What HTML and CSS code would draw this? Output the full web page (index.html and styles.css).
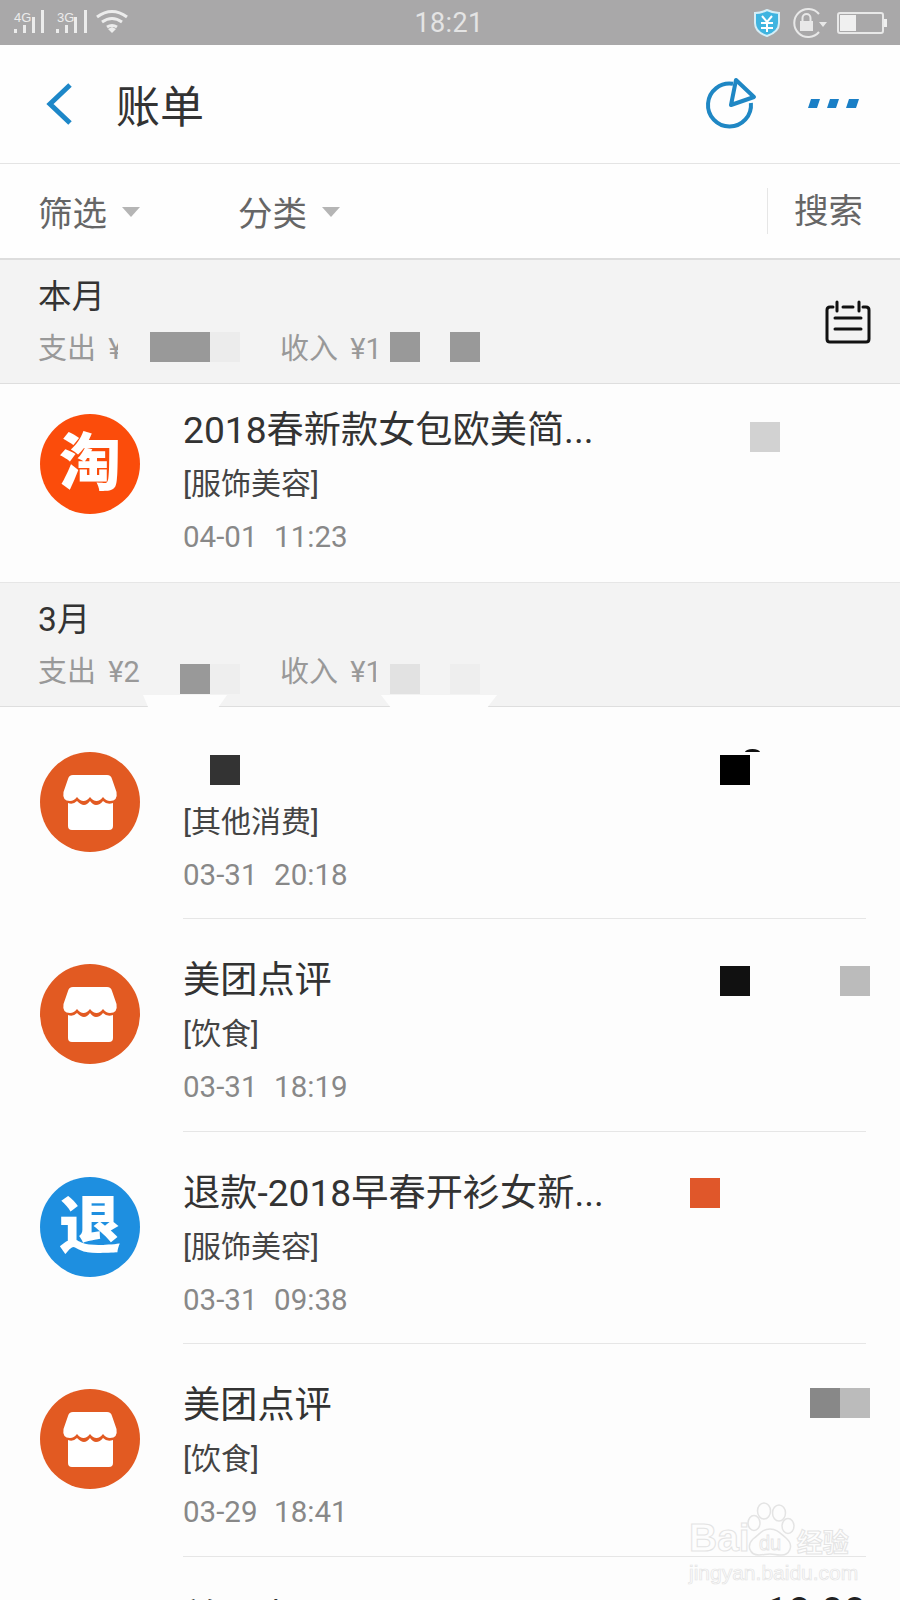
FILE: index.html
```html
<!DOCTYPE html>
<html>

<head>
    <title>账单</title>
    <link rel="stylesheet" href="styles.css">
</head>

<body>
    <div class="page">
        <!-- barra de status -->
        <div class="status-bar">
            <svg class="status-signal" width="135" height="45" viewBox="0 0 135 45">
                <text class="net-label" x="14" y="22">4G</text>
                <text class="net-label" x="57" y="22">3G</text>
                <path class="bars" d="M14 29h3v4h-3zM23 25h3v8h-3zM32 17h3v16h-3zM41 10h3v23h-3zM56 29h3v4h-3zM65 25h3v8h-3zM74 17h3v16h-3zM84 10h3v23h-3z" />
                <path class="wifi" d="M97 17q15-11 30 0M102 22q10-7 20 0M107 27q5-3 10 0" />
                <path class="bars" d="M108 29l4-2 4 2-4 4z" />
            </svg>
            <div class="status-time">18:21</div>
            <div class="status-right">
                <svg class="st-shield" width="28" height="30" viewBox="0 0 28 30">
                    <path class="shield" d="M14 2q6 3 12 3v10q0 9-12 13Q2 24 2 15V5q6 0 12-3z" />
                    <path class="shield-mark" d="M9 8l5 6 5-6M8 15h12M8 20h12M14 14v10" />
                </svg>
                <svg class="st-lock" width="38" height="30" viewBox="0 0 38 30">
                    <path class="lock-ring" d="M29 24a14 14 0 1 1 0-18" />
                    <path class="lock-fill" d="M10 13h13v10H10zM37 14l-4 5-4-5z" />
                    <path class="lock-ring" d="M12.500 13V10a4 4 0 0 1 8 0v3" />
                </svg>
                <svg width="52" height="24" viewBox="0 0 52 24">
                    <rect class="batt-box" x="1" y="2" width="45" height="20" rx="2" />
                    <rect class="batt-fill" x="3" y="4" width="16" height="16" />
                    <rect class="batt-cap" x="47" y="8" width="3" height="8" />
                </svg>
            </div>
        </div>

        <!-- cabecalho -->
        <header class="top-bar">
            <svg class="back-icon" width="28" height="42" viewBox="0 0 28 42">
                <path d="M25 2L5 21l20 19" />
            </svg>
            <h1 class="top-title">账单</h1>
            <svg class="pie-icon" width="52" height="54" viewBox="0 0 52 54">
                <path d="M28 6.800A21.500 21.500 0 1 0 45.900 26" />
                <path d="M31 3L49 20L26 28Z" />
            </svg>
            <svg class="more-icon" width="52" height="10" viewBox="0 0 52 10">
                <path d="M3 0h9l-3 9H0zM22 0h9l-3 9h-9zM41 0h10l-3 9h-10z" />
            </svg>
        </header>

        <!-- filtros -->
        <div class="filter-bar">
            <div class="filter filter-first">筛选<span class="caret"></span></div>
            <div class="filter">分类<span class="caret"></span></div>
            <div class="search">搜索</div>
        </div>

        <!-- mes atual -->
        <section class="month">
            <div class="month-name">本月</div>
            <div class="month-sum">
                <span class="sum-out clip-a">支出 ¥</span>
                <span class="sum-in clip-c">收入 ¥1</span>
            </div>
            <svg class="cal-icon" width="46" height="44" viewBox="0 0 46 44">
                <path d="M8 7H5Q2 7 2 10v29q0 3 3 3h36q3 0 3-3V10q0-3-3-3h-3M18 7h10M12 2v9M34 2v9M10 18h26M10 29h26" />
            </svg>
            <i class="blur m-150 w-60 t-72 c-999"></i>
            <i class="blur m-210 t-72 c-ec"></i>
            <i class="blur m-390 t-72 c-999"></i>
            <i class="blur m-450 t-72 c-999"></i>
        </section>

        <div class="row row-tight">
            <i class="smudge smudge-top"></i>
            <div class="avatar avatar-taobao">淘</div>
            <div class="row-body row-last">
                <div class="row-title">2018春新款女包欧美简...</div>
                <div class="row-cat">[服饰美容]</div>
                <div class="row-date">04-01&nbsp;&nbsp;11:23</div>
            </div>
            <i class="blur m-750 t-38 c-d2"></i>
        </div>

        <!-- marco -->
        <section class="month month-line">
            <div class="month-name">3月</div>
            <div class="month-sum">
                <span class="sum-out clip-b">支出 ¥2</span>
                <span class="sum-in clip-d">收入 ¥1</span>
            </div>
            <i class="blur m-180 t-81 c-999"></i>
            <i class="blur m-210 t-81 c-ee"></i>
            <i class="blur m-390 t-81 c-e2"></i>
            <i class="blur m-450 t-81 c-ee"></i>
            <i class="smudge smudge-a"></i>
            <i class="smudge smudge-b"></i>
        </section>

        <div class="row">
            <div class="avatar avatar-shop">
                <svg width="100" height="100" viewBox="0 0 100 100">
                    <use href="#shop" />
                </svg>
            </div>
            <div class="row-body">
                <div class="row-title">&nbsp;</div>
                <div class="row-cat">[其他消费]</div>
                <div class="row-date">03-31&nbsp;&nbsp;20:18</div>
            </div>
            <i class="blur m-210 t-48 c-33"></i>
            <i class="blur m-720 t-48 c-00"></i>
            <i class="arc-bit"></i>
        </div>

        <div class="row">
            <div class="avatar avatar-shop">
                <svg width="100" height="100" viewBox="0 0 100 100">
                    <use href="#shop" />
                </svg>
            </div>
            <div class="row-body">
                <div class="row-title">美团点评</div>
                <div class="row-cat">[饮食]</div>
                <div class="row-date">03-31&nbsp;&nbsp;18:19</div>
            </div>
            <i class="blur m-720 t-47 c-11"></i>
            <i class="blur m-840 t-47 c-bb"></i>
        </div>

        <div class="row">
            <div class="avatar avatar-refund">退</div>
            <div class="row-body">
                <div class="row-title">退款-2018早春开衫女新...</div>
                <div class="row-cat">[服饰美容]</div>
                <div class="row-date">03-31&nbsp;&nbsp;09:38</div>
            </div>
            <i class="blur m-690 t-46 c-or"></i>
        </div>

        <div class="row">
            <div class="avatar avatar-shop">
                <svg width="100" height="100" viewBox="0 0 100 100">
                    <use href="#shop" />
                </svg>
            </div>
            <div class="row-body">
                <div class="row-title">美团点评</div>
                <div class="row-cat">[饮食]</div>
                <div class="row-date">03-29&nbsp;&nbsp;18:41</div>
            </div>
            <i class="blur m-810 t-44 c-88"></i>
            <i class="blur m-840 t-44 c-bb"></i>
        </div>

        <div class="row">
            <div class="avatar avatar-shop">
                <svg width="100" height="100" viewBox="0 0 100 100">
                    <use href="#shop" />
                </svg>
            </div>
            <div class="row-body">
                <div class="row-title">美团点评</div>
            </div>
            <div class="amount">18.00</div>
        </div>

        <!-- marca d'agua -->
        <div class="watermark">
            <div class="wm-top">
                <span class="wm-bai">Bai</span>
                <svg class="wm-paw" width="48" height="56" viewBox="0 0 48 56">
                    <ellipse cx="17" cy="9" rx="6.500" ry="8" />
                    <ellipse cx="32" cy="11" rx="6.500" ry="8" />
                    <ellipse cx="7" cy="21" rx="6" ry="7.500" />
                    <ellipse cx="41" cy="24" rx="6" ry="7.500" />
                    <path d="M23 27c7 0 10 4 16 9 9 8 3 18-6 17-4 0-6-1-10-1s-7 1-11 1C3 53-1 44 6 37c7-5 9-10 17-10z" />
                    <text class="wm-du" x="12" y="48">du</text>
                </svg>
                <span class="wm-cn">经验</span>
            </div>
            <div class="wm-url">jingyan.baidu.com</div>
        </div>

        <svg class="defs" width="0" height="0">
            <symbol id="shop" viewBox="0 0 100 100">
                <path d="M33 23H67Q71 23 72 27L76.500 40Q78 49 70 49Q66 49 63 45Q60 49 56.500 49Q53 49 50 45Q47 49 43.500 49Q40 49 37 45Q34 49 30 49Q22 49 23.500 40L28 27Q29 23 33 23Z" />
                <path d="M28 51Q33 53 37 49Q41 53 44 53Q47 53 50 49Q53 53 56 53Q60 53 63 49Q67 53 73 51V74Q73 78 69 78H32Q28 78 28 74Z" />
            </symbol>
        </svg>
    </div>
</body>

</html>
```

FILE: styles.css
```css
* {
    box-sizing: border-box;
}

html,
body {
    margin: 0;
    padding: 0;
    overflow: hidden;
}

body {
    background-color: #fdfdfd;
    font-family: Roboto, "Noto Sans CJK SC", sans-serif;
}

.page {
    position: relative;
    width: 900px;
    height: 1600px;
    overflow: hidden;
}

.defs {
    position: absolute;
}

/* barra de status */
.status-bar {
    display: grid;
    grid-template-columns: 1fr auto 1fr;
    align-items: center;
    height: 45px;
    background-color: #a9a8a9;
}

.status-signal {
    display: block;
}

.net-label {
    font-family: "Liberation Sans", sans-serif;
    font-size: 13px;
    fill: #ececec;
}

.bars {
    fill: #ececec;
}

.wifi {
    fill: none;
    stroke: #ececec;
    stroke-width: 3;
}

.status-time {
    font-size: 27px;
    color: #e4e4e4;
    letter-spacing: 0.4px;
    padding-right: 2px;
}

.status-right {
    display: flex;
    align-items: center;
    justify-content: flex-end;
    padding-right: 11px;
}

.st-shield {
    margin-right: 9px;
}

.st-lock {
    margin-right: 9px;
}

.shield {
    fill: #3fb4e0;
    stroke: #d5eef7;
    stroke-width: 2;
}

.shield-mark {
    fill: none;
    stroke: #ffffff;
    stroke-width: 2;
}

.lock-ring {
    fill: none;
    stroke: #e8e8e8;
    stroke-width: 2;
}

.lock-fill {
    fill: #e8e8e8;
}

.batt-box {
    fill: none;
    stroke: #e8e8e8;
    stroke-width: 2;
}

.batt-fill,
.batt-cap {
    fill: #f0f0f0;
}

/* cabecalho */
.top-bar {
    display: flex;
    align-items: center;
    height: 119px;
    border-bottom: 1px solid #e4e4e4;
    background-color: #fefefe;
}

.back-icon {
    margin-left: 45px;
}

.back-icon path {
    fill: none;
    stroke: #1d87c8;
    stroke-width: 5;
}

.top-title {
    margin: 0 0 0 43px;
    font-size: 44px;
    font-weight: 400;
    color: #333333;
    flex: 1;
}

.pie-icon {
    margin-right: 51px;
}

.pie-icon path {
    fill: none;
    stroke: #1f87c4;
    stroke-width: 4;
    stroke-linejoin: round;
}

.more-icon {
    margin-right: 40px;
    fill: #1a7fc6;
}

/* filtros */
.filter-bar {
    display: flex;
    align-items: center;
    height: 96px;
    border-bottom: 2px solid #dddddd;
    padding-left: 38px;
    background-color: #fefefe;
}

.filter {
    display: flex;
    align-items: center;
    font-size: 34.500px;
    color: #666666;
}

.filter-first {
    width: 200px;
}

.caret {
    width: 0;
    height: 0;
    margin-left: 15px;
    margin-top: 2px;
    border-left: 9px solid transparent;
    border-right: 9px solid transparent;
    border-top: 10px solid #b5b5b5;
}

.search {
    margin-left: auto;
    margin-right: 37px;
    padding-left: 26px;
    border-left: 1px solid #e6e6e6;
    font-size: 34.500px;
    line-height: 46px;
    color: #666666;
}

/* meses */
.month {
    position: relative;
    height: 124px;
    padding: 10px 0 0 38px;
    background-color: #f3f3f3;
    border-bottom: 1px solid #dedede;
}

.month-line {
    height: 125px;
    border-top: 1px solid #e6e6e6;
}

.month-name {
    font-size: 33.500px;
    line-height: 54px;
    color: #333333;
}

.month-sum {
    display: flex;
    font-size: 29px;
    line-height: 50px;
    word-spacing: 5px;
    color: #999999;
}

.month-sum span {
    display: block;
    white-space: nowrap;
    overflow: hidden;
}

.clip-a {
    width: 80px;
    margin-right: 162px;
}

.clip-b {
    width: 110px;
    margin-right: 132px;
}

.clip-c {
    width: 98px;
}

.clip-d {
    width: 96px;
}

.cal-icon {
    position: absolute;
    top: 40px;
    left: 825px;
    fill: none;
    stroke: #111111;
    stroke-width: 3;
}

.cal-icon path {
    stroke-linecap: round;
}

/* linhas */
.row {
    position: relative;
    display: flex;
    align-items: flex-start;
    height: 212.400px;
}

.row-tight {
    height: 198px;
}

.row-tight .avatar {
    margin-top: 30px;
}

.row-tight .row-body {
    padding-top: 19px;
}

.avatar {
    display: flex;
    align-items: center;
    justify-content: center;
    flex-shrink: 0;
    width: 100px;
    height: 100px;
    margin: 45px 0 0 40px;
    border-radius: 50%;
    color: #ffffff;
    font-size: 62px;
    font-weight: 900;
    line-height: 1;
}

.avatar-taobao {
    background-color: #fb4c0b;
}

.avatar-shop {
    background-color: #e25a22;
    fill: #ffffff;
}

.avatar-refund {
    background-color: #1e8fe0;
}

.row-body {
    flex: 1;
    height: 100%;
    margin: 0 34px 0 43px;
    padding-top: 34px;
    border-bottom: 1px solid #e6e6e6;
}

.row-last {
    border-bottom: none;
}

.row-title {
    font-size: 37.200px;
    line-height: 54px;
    color: #333333;
    white-space: nowrap;
}

.row-cat {
    font-size: 30px;
    line-height: 54px;
    color: #444444;
}

.row-date {
    font-size: 29.500px;
    line-height: 52px;
    word-spacing: 1px;
    color: #888888;
}

.amount {
    position: absolute;
    top: 29px;
    right: 34px;
    font-size: 40px;
    line-height: 54px;
    color: #222222;
}

/* mosaicos que cobrem os valores */
.blur {
    position: absolute;
    width: 30px;
    height: 30px;
}

.w-60 { width: 60px; }

.m-150 { left: 150px; }
.m-180 { left: 180px; }
.m-210 { left: 210px; }
.m-390 { left: 390px; }
.m-450 { left: 450px; }
.m-690 { left: 690px; }
.m-720 { left: 720px; }
.m-750 { left: 750px; }
.m-810 { left: 810px; }
.m-840 { left: 840px; }

.t-38 { top: 38px; }
.t-44 { top: 44px; }
.t-46 { top: 46px; }
.t-47 { top: 47px; }
.t-48 { top: 48px; }
.t-72 { top: 72px; }
.t-81 { top: 81px; }

.c-00 { background-color: #000000; }
.c-11 { background-color: #111111; }
.c-33 { background-color: #333333; }
.c-88 { background-color: #888888; }
.c-999 { background-color: #999999; }
.c-bb { background-color: #bbbbbb; }
.c-d2 { background-color: #d2d2d2; }
.c-e2 { background-color: #e2e2e2; }
.c-ec { background-color: #ececec; }
.c-ee { background-color: #eeeeee; }
.c-or { background-color: #e0572a; }

.arc-bit {
    position: absolute;
    top: 42px;
    left: 745px;
    width: 15px;
    height: 3px;
    border-radius: 50% 50% 0 0 / 100% 100% 0 0;
    background-color: #111111;
}

.smudge {
    position: absolute;
    background-color: #fdfdfd;
}

.smudge-top {
    top: 0;
    left: 170px;
    width: 62px;
    height: 5px;
    clip-path: polygon(0 0, 100% 0, 70% 100%, 30% 100%);
}

.smudge-a {
    top: 112px;
    left: 143px;
    width: 84px;
    height: 12px;
    clip-path: polygon(0 0, 100% 0, 90% 100%, 6% 100%);
}

.smudge-b {
    top: 112px;
    left: 381px;
    width: 116px;
    height: 12px;
    clip-path: polygon(0 0, 100% 0, 92% 100%, 8% 100%);
}

/* marca d'agua */
.watermark {
    position: absolute;
    top: 1502px;
    left: 689px;
    width: 180px;
    color: transparent;
}

.wm-top {
    display: flex;
    align-items: flex-end;
    height: 59px;
    font-family: "Liberation Sans", sans-serif;
    font-size: 39px;
    font-weight: 700;
    line-height: 46px;
    -webkit-text-stroke: 1px #e4e4e4;
}

.wm-bai {
    flex-shrink: 0;
}

.wm-paw {
    flex-shrink: 0;
    align-self: flex-start;
    margin-left: -3px;
    fill: #fdfdfd;
    stroke: #e4e4e4;
    stroke-width: 1.500;
}

.wm-du {
    font-size: 20px;
    font-weight: 400;
    stroke-width: 0.800;
}

.wm-cn {
    flex-shrink: 0;
    font-family: "Noto Sans CJK SC", sans-serif;
    font-size: 26px;
    line-height: 40px;
    margin-left: 2px;
    white-space: nowrap;
}

.wm-url {
    font-family: "Liberation Sans", sans-serif;
    font-size: 21px;
    line-height: 26px;
    margin-top: -1px;
    white-space: nowrap;
    -webkit-text-stroke: 0.7px #e4e4e4;
}
```
